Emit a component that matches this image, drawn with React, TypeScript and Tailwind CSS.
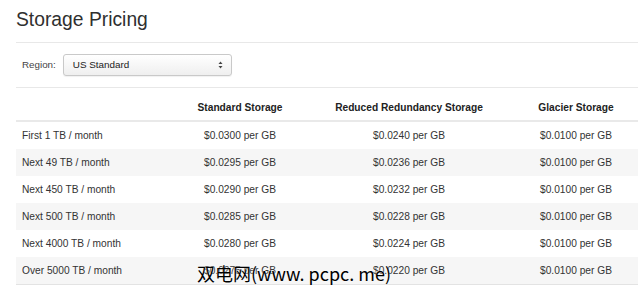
import React from "react";

const rows = [
  { tier: "First 1 TB / month", standard: "$0.0300 per GB", reduced: "$0.0240 per GB", glacier: "$0.0100 per GB" },
  { tier: "Next 49 TB / month", standard: "$0.0295 per GB", reduced: "$0.0236 per GB", glacier: "$0.0100 per GB" },
  { tier: "Next 450 TB / month", standard: "$0.0290 per GB", reduced: "$0.0232 per GB", glacier: "$0.0100 per GB" },
  { tier: "Next 500 TB / month", standard: "$0.0285 per GB", reduced: "$0.0228 per GB", glacier: "$0.0100 per GB" },
  { tier: "Next 4000 TB / month", standard: "$0.0280 per GB", reduced: "$0.0224 per GB", glacier: "$0.0100 per GB" },
  { tier: "Over 5000 TB / month", standard: "$0.0275 per GB", reduced: "$0.0220 per GB", glacier: "$0.0100 per GB" },
];

function SelectArrows() {
  return (
    <svg width="5" height="8" viewBox="0 0 5 8" aria-hidden="true">
      <path d="M2.5 0.5 L4.5 3 L0.5 3 Z" fill="#444" />
      <path d="M2.5 7.5 L4.5 5 L0.5 5 Z" fill="#444" />
    </svg>
  );
}

export default function App() {
  return (
    <div className="relative w-[640px] h-[298px] overflow-hidden bg-white text-[#333] font-['Liberation_Sans',Arial,sans-serif]">
      <div className="w-[622px] ml-4">
        {/* Page header */}
        <div className="pt-[9px] pb-[11px] border-b border-[#e8e8e8]">
          <h1 className="text-[19.3px] leading-[22px] font-normal text-[#2f2f2f]">Storage Pricing</h1>
        </div>

        {/* Region picker */}
        <div className="flex items-center gap-[7px] px-[6px] py-[11px] border-b border-[#e8e8e8]">
          <span className="text-[9.8px] text-[#444]">Region:</span>
          <div className="flex items-center justify-between w-[169px] h-[22px] pl-[9px] pr-[8px] rounded-[3px] border border-[#c9c9c9] bg-gradient-to-b from-white to-[#efefef] shadow-[0_1px_1px_rgba(0,0,0,0.06)]">
            <span className="text-[9.9px] text-[#222]">US Standard</span>
            <SelectArrows />
          </div>
        </div>

        {/* Pricing table */}
        <div className="mt-[6px] text-[10.2px] leading-[15px]">
          <div className="grid grid-cols-[160px_128px_210px_124px] border-b-2 border-[#e9e9e9] font-bold text-[#222]">
            <div className="px-[6px] pt-[6px] pb-[5px]" />
            <div className="px-[6px] pt-[6px] pb-[5px] text-center">Standard Storage</div>
            <div className="px-[6px] pt-[6px] pb-[5px] text-center">Reduced Redundancy Storage</div>
            <div className="px-[6px] pt-[6px] pb-[5px] text-center">Glacier Storage</div>
          </div>
          {rows.map((r, i) => (
            <div
              key={r.tier}
              className={
                "grid grid-cols-[160px_128px_210px_124px] text-[#333] " +
                (i % 2 === 1 ? "bg-[#f6f6f6]" : "bg-white") +
                (i === rows.length - 1 ? " border-b border-[#e3e3e3]" : "")
              }
            >
              <div className="px-[6px] py-[6px]">{r.tier}</div>
              <div className="px-[6px] py-[6px] text-center">{r.standard}</div>
              <div className="px-[6px] py-[6px] text-center">{r.reduced}</div>
              <div className="px-[6px] py-[6px] text-center">{r.glacier}</div>
            </div>
          ))}
        </div>
      </div>

      {/* Watermark */}
      <div className="absolute left-[197px] top-[261px] text-[18px] leading-[24px] text-black font-['Noto_Sans_CJK_SC','DejaVu_Sans',sans-serif] [text-shadow:0_0_2px_#fff]">
        双电网(www. pcpc. me)
      </div>
    </div>
  );
}
